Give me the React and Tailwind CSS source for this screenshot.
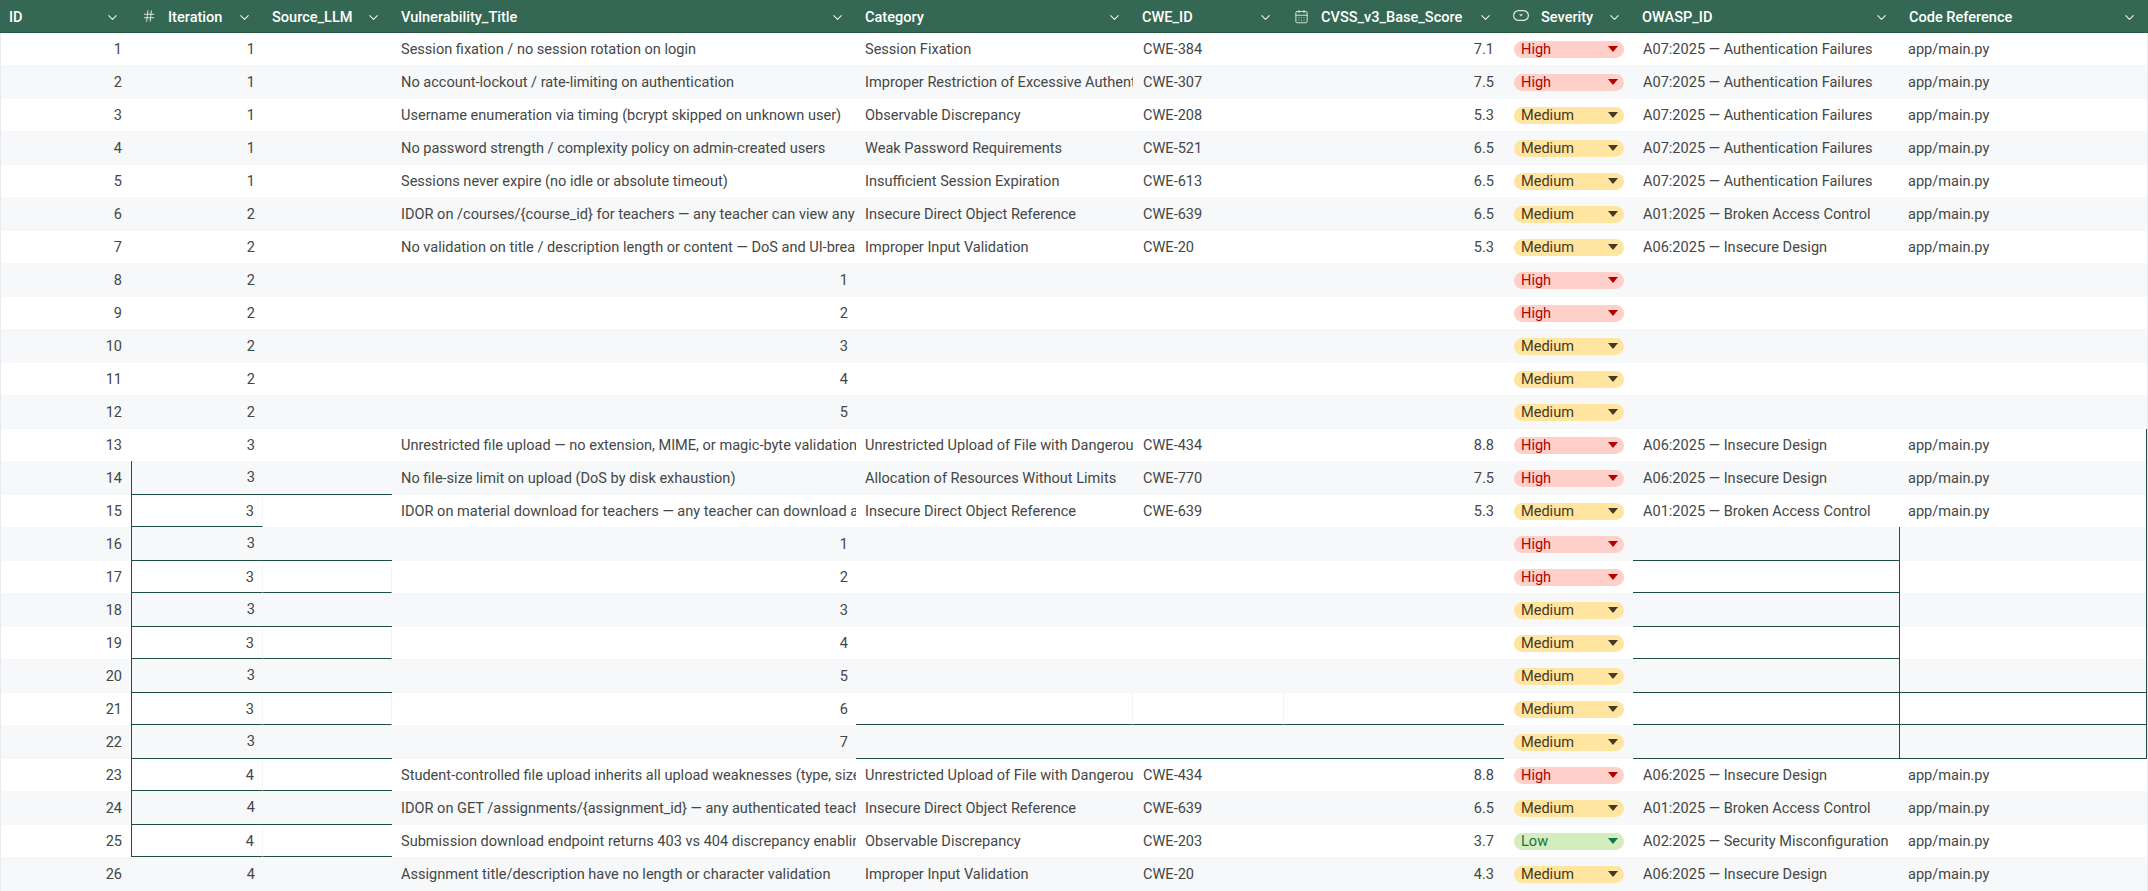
import { CalendarDays, ChevronDown, Hash } from 'lucide-react';

const DARK = 'border-[#1f4f3e]';

const columns = [
  { name: 'ID', width: 'w-[131px]' },
  { name: 'Iteration', width: 'w-[132px]', icon: 'hash' },
  { name: 'Source_LLM', width: 'w-[129px]' },
  { name: 'Vulnerability_Title', width: 'w-[464px]' },
  { name: 'Category', width: 'w-[277px]' },
  { name: 'CWE_ID', width: 'w-[151px]' },
  { name: 'CVSS_v3_Base_Score', width: 'w-[220px]', icon: 'calendar' },
  { name: 'Severity', width: 'w-[129px]', icon: 'pill' },
  { name: 'OWASP_ID', width: 'w-[267px]' },
  { name: 'Code Reference', width: 'w-[248px]' },
];

const A07 = 'A07:2025 — Authentication Failures';
const A01 = 'A01:2025 — Broken Access Control';
const A06 = 'A06:2025 — Insecure Design';
const A02 = 'A02:2025 — Security Misconfiguration';
const UPLOAD = 'Unrestricted Upload of File with Dangerous Type';
const IDOR = 'Insecure Direct Object Reference';

// id, iteration, title, category, cwe, score, severity, owasp
const rows = [
  [1, 1, 'Session fixation / no session rotation on login', 'Session Fixation', 'CWE-384', '7.1', 'High', A07],
  [2, 1, 'No account-lockout / rate-limiting on authentication', 'Improper Restriction of Excessive Authentication Attempts', 'CWE-307', '7.5', 'High', A07],
  [3, 1, 'Username enumeration via timing (bcrypt skipped on unknown user)', 'Observable Discrepancy', 'CWE-208', '5.3', 'Medium', A07],
  [4, 1, 'No password strength / complexity policy on admin-created users', 'Weak Password Requirements', 'CWE-521', '6.5', 'Medium', A07],
  [5, 1, 'Sessions never expire (no idle or absolute timeout)', 'Insufficient Session Expiration', 'CWE-613', '6.5', 'Medium', A07],
  [6, 2, 'IDOR on /courses/{course_id} for teachers — any teacher can view any course', IDOR, 'CWE-639', '6.5', 'Medium', A01],
  [7, 2, 'No validation on title / description length or content — DoS and UI-breaking input', 'Improper Input Validation', 'CWE-20', '5.3', 'Medium', A06],
  [8, 2, 1, '', '', '', 'High', ''],
  [9, 2, 2, '', '', '', 'High', ''],
  [10, 2, 3, '', '', '', 'Medium', ''],
  [11, 2, 4, '', '', '', 'Medium', ''],
  [12, 2, 5, '', '', '', 'Medium', ''],
  [13, 3, 'Unrestricted file upload — no extension, MIME, or magic-byte validation', UPLOAD, 'CWE-434', '8.8', 'High', A06],
  [14, 3, 'No file-size limit on upload (DoS by disk exhaustion)', 'Allocation of Resources Without Limits', 'CWE-770', '7.5', 'High', A06],
  [15, 3, 'IDOR on material download for teachers — any teacher can download any file', IDOR, 'CWE-639', '5.3', 'Medium', A01],
  [16, 3, 1, '', '', '', 'High', ''],
  [17, 3, 2, '', '', '', 'High', ''],
  [18, 3, 3, '', '', '', 'Medium', ''],
  [19, 3, 4, '', '', '', 'Medium', ''],
  [20, 3, 5, '', '', '', 'Medium', ''],
  [21, 3, 6, '', '', '', 'Medium', ''],
  [22, 3, 7, '', '', '', 'Medium', ''],
  [23, 4, 'Student-controlled file upload inherits all upload weaknesses (type, size, content)', UPLOAD, 'CWE-434', '8.8', 'High', A06],
  [24, 4, 'IDOR on GET /assignments/{assignment_id} — any authenticated teacher can read', IDOR, 'CWE-639', '6.5', 'Medium', A01],
  [25, 4, 'Submission download endpoint returns 403 vs 404 discrepancy enabling enumeration', 'Observable Discrepancy', 'CWE-203', '3.7', 'Low', A02],
  [26, 4, 'Assignment title/description have no length or character validation', 'Improper Input Validation', 'CWE-20', '4.3', 'Medium', A06],
];

const pillStyles = {
  High: 'bg-[#ffcfc9] text-[#b10202]',
  Medium: 'bg-[#ffe5a0] text-[#473821]',
  Low: 'bg-[#d4edbc] text-[#11734b]',
};

function PillIcon() {
  return (
    <svg width="16" height="11" viewBox="0 0 16 11" fill="none" className="shrink-0 text-[#dce7e2]">
      <rect x="0.6" y="0.6" width="14.8" height="9.8" rx="4.9" stroke="currentColor" strokeWidth="1.2" />
      <path d="M6 4.2h4L8 6.6z" fill="currentColor" />
    </svg>
  );
}

function HeaderCell({ name, width, icon }) {
  return (
    <div className={`${width} shrink-0 flex items-center pt-[3px] pl-[9px] pr-[11px] border-b border-[#28573f]`}>
      {icon === 'hash' && <Hash size={14} strokeWidth={1.6} className="shrink-0 mr-[12px] ml-[2px] mb-[3px] text-[#e6eeea]" />}
      {icon === 'calendar' && <CalendarDays size={15} strokeWidth={1.5} className="shrink-0 mr-[12px] ml-[1px] mb-[3px] text-[#dce7e2]" />}
      {icon === 'pill' && <span className="mr-[12px] mb-[4px] flex"><PillIcon /></span>}
      <span className="font-medium text-white whitespace-nowrap">{name}</span>
      <ChevronDown size={15} strokeWidth={1.7} className="ml-auto mb-[1px] shrink-0 text-[#eef4f1]" />
    </div>
  );
}

function Cell({ width, line, pad = '', className = '', children }) {
  return (
    <div className={`${width} shrink-0 h-full flex items-center overflow-hidden whitespace-nowrap ${pad} ${line ? `border-b ${DARK}` : ''} ${className}`}>
      {children}
    </div>
  );
}

function Row({ row }) {
  const [id, iter, title, category, cwe, score, severity, owasp] = row;
  const white = id % 2 === 1;
  const pad = white ? 'pt-[2px]' : 'pt-px';
  const faint = white && id >= 15 && id <= 25 ? 'border-r border-r-[#f4f5f6]' : '';
  const faintMid = white && id >= 17 && id <= 21 ? 'border-r border-r-[#f4f5f6]' : '';
  const boxed = id >= 14 && id <= 25;
  const group = id === 14 || (id >= 16 && id <= 25);
  const scoreLine = id === 21 || id === 22;
  const owaspLine = id >= 16 && id <= 22;
  const codeLine = id >= 20 && id <= 22;

  return (
    <div className={`flex border-r border-r-[#e8eaed] ${white ? 'h-[32px] bg-white' : 'h-[34px] bg-[#f6f8f9]'}`}>
      <Cell width="w-[131px]" pad={pad} className="justify-end pr-[9px] border-l border-l-[#e8eaed]">{id}</Cell>
      <Cell width="w-[132px]" pad={pad} line={boxed} className={`justify-end pr-[8px] ${boxed ? `border-l ${DARK}` : ''} ${faint}`}>{iter}</Cell>
      <Cell width="w-[129px]" line={group} className={faintMid} />
      {typeof title === 'number'
        ? <Cell width="w-[464px]" pad={pad} className="justify-end pr-[8px]">{title}</Cell>
        : <Cell width="w-[464px]" pad={pad} className="pl-[9px]">{title}</Cell>}
      <Cell width="w-[277px]" pad={pad} line={scoreLine} className={`pl-[9px] ${id === 21 ? 'border-r border-r-[#f4f5f6]' : ''}`}>{category}</Cell>
      <Cell width="w-[151px]" pad={pad} line={scoreLine} className={`pl-[10px] ${id === 21 ? 'border-r border-r-[#f4f5f6]' : ''}`}>{cwe}</Cell>
      <Cell width="w-[220px]" pad={pad} line={scoreLine} className="justify-end pr-[10px]">{score}</Cell>
      <Cell width="w-[129px]" className="pl-[10px] pr-[9px]">
        <span className={`w-[110px] h-[17px] rounded-full flex items-center justify-between pl-[7px] pr-[6px] pt-[1px] ${pillStyles[severity]}`}>
          {severity}
          <span className="w-0 h-0 mb-[2px] border-x-[5px] border-x-transparent border-t-[6px] border-t-current" />
        </span>
      </Cell>
      <Cell width="w-[267px]" pad={pad} line={owaspLine} className={`pl-[10px] ${id >= 16 && id <= 22 ? `border-r ${DARK}` : ''}`}>{owasp}</Cell>
      <Cell width="w-[247px]" pad={pad} line={codeLine} className={`pl-[8px] ${id >= 13 && id <= 22 ? `border-r ${DARK}` : ''}`}>
        {owasp ? 'app/main.py' : ''}
      </Cell>
    </div>
  );
}

export default function App() {
  return (
    <div className="w-[2148px] h-[891px] overflow-hidden bg-white text-[14.55px] text-[#444746] font-['Roboto',sans-serif]">
      <div className="flex h-[33px] bg-[#356854]">
        {columns.map((col) => (
          <HeaderCell key={col.name} {...col} />
        ))}
      </div>
      {rows.map((row) => (
        <Row key={row[0]} row={row} />
      ))}
    </div>
  );
}
